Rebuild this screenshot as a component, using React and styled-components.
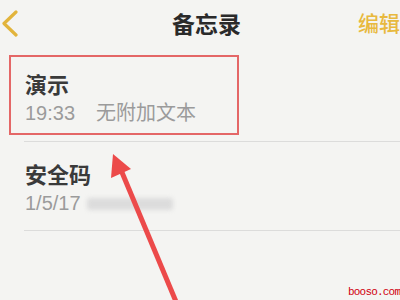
import React from "react";
import styled, { createGlobalStyle } from "styled-components";

const Global = createGlobalStyle`
  html, body { margin: 0; padding: 0; }
  body {
    width: 400px;
    height: 300px;
    overflow: hidden;
    background: #f4f4f2;
    font-family: "Noto Sans CJK SC", "Noto Sans", sans-serif;
  }
`;

const Page = styled.div`
  position: relative;
  width: 400px;
  height: 300px;
  overflow: hidden;
  background: #f4f4f2;
`;

const Header = styled.header`
  display: flex;
  align-items: center;
  height: 48px;
  white-space: nowrap;
`;

const BackButton = styled.div`
  display: flex;
  align-items: center;
  width: 20px;
  height: 48px;
`;

const Title = styled.h1`
  margin: 0 0 3px 152px;
  font-size: 23px;
  line-height: 30px;
  font-weight: 700;
  color: #2a2a2a;
`;

const EditButton = styled.span`
  margin: 0 0 4px 117px;
  font-size: 21px;
  line-height: 28px;
  font-weight: 500;
  color: #e8b93e;
`;

const List = styled.div`
  display: flex;
  flex-direction: column;
`;

const Row = styled.div`
  position: relative;
  display: flex;
  flex-direction: column;
  padding: ${(p) => p.$pad};
  margin-left: 24px;
  border-bottom: 1px solid #dcdcdb;
`;

const NoteTitle = styled.div`
  font-size: 22px;
  line-height: 28px;
  font-weight: 600;
  color: #3a3a3a;
  margin-left: 1px;
`;

const Meta = styled.div`
  display: flex;
  align-items: center;
  margin-top: 3px;
  margin-left: 1px;
  font-family: "Liberation Sans", "Noto Sans CJK SC", sans-serif;
  font-size: 20px;
  line-height: 26px;
  color: #9b9b9b;
`;

const Time = styled.span`
  margin-right: ${(p) => p.$gap}px;
`;

const Redacted = styled.span`
  display: inline-block;
  width: 86px;
  height: 12px;
  margin-top: 2px;
  border-radius: 3px;
  background: #dcdcdc;
  filter: blur(2px);
`;

const Highlight = styled.div`
  position: absolute;
  left: -15px;
  top: 7px;
  width: 226px;
  height: 76px;
  border: 2px solid #e46767;
  pointer-events: none;
`;

const ArrowLayer = styled.svg`
  position: absolute;
  left: 0;
  top: 0;
  width: 400px;
  height: 300px;
  pointer-events: none;
`;

const Watermark = styled.span`
  position: absolute;
  left: 348px;
  top: 286px;
  font-family: "Liberation Mono", monospace;
  font-size: 11px;
  line-height: 13px;
  letter-spacing: -0.8px;
  color: #d0000f;
`;

export default function App() {
  return (
    <Page>
      <Global />
      <Header>
        <BackButton>
          <svg width="20" height="28" viewBox="0 0 20 28">
            <polyline
              points="16,2 4,13.5 16,25"
              fill="none"
              stroke="#e2b43c"
              strokeWidth="3.2"
              strokeLinecap="round"
              strokeLinejoin="round"
            />
          </svg>
        </BackButton>
        <Title>备忘录</Title>
        <EditButton>编辑</EditButton>
      </Header>
      <List>
        <Row $pad="21px 0 15px 0">
          <Highlight />
          <NoteTitle>演示</NoteTitle>
          <Meta>
            <Time $gap={21}>19:33</Time>
            <span>无附加文本</span>
          </Meta>
        </Row>
        <Row $pad="17px 0 14px 0">
          <NoteTitle>安全码</NoteTitle>
          <Meta>
            <Time $gap={6}>1/5/17</Time>
            <Redacted />
          </Meta>
        </Row>
      </List>
      <ArrowLayer viewBox="0 0 400 300">
        <line x1="121" y1="170" x2="177" y2="304" stroke="#ec4a4a" strokeWidth="5" />
        <polygon points="113,154 111,178 131,169" fill="#ec4a4a" />
      </ArrowLayer>
      <Watermark>booso.com</Watermark>
    </Page>
  );
}
